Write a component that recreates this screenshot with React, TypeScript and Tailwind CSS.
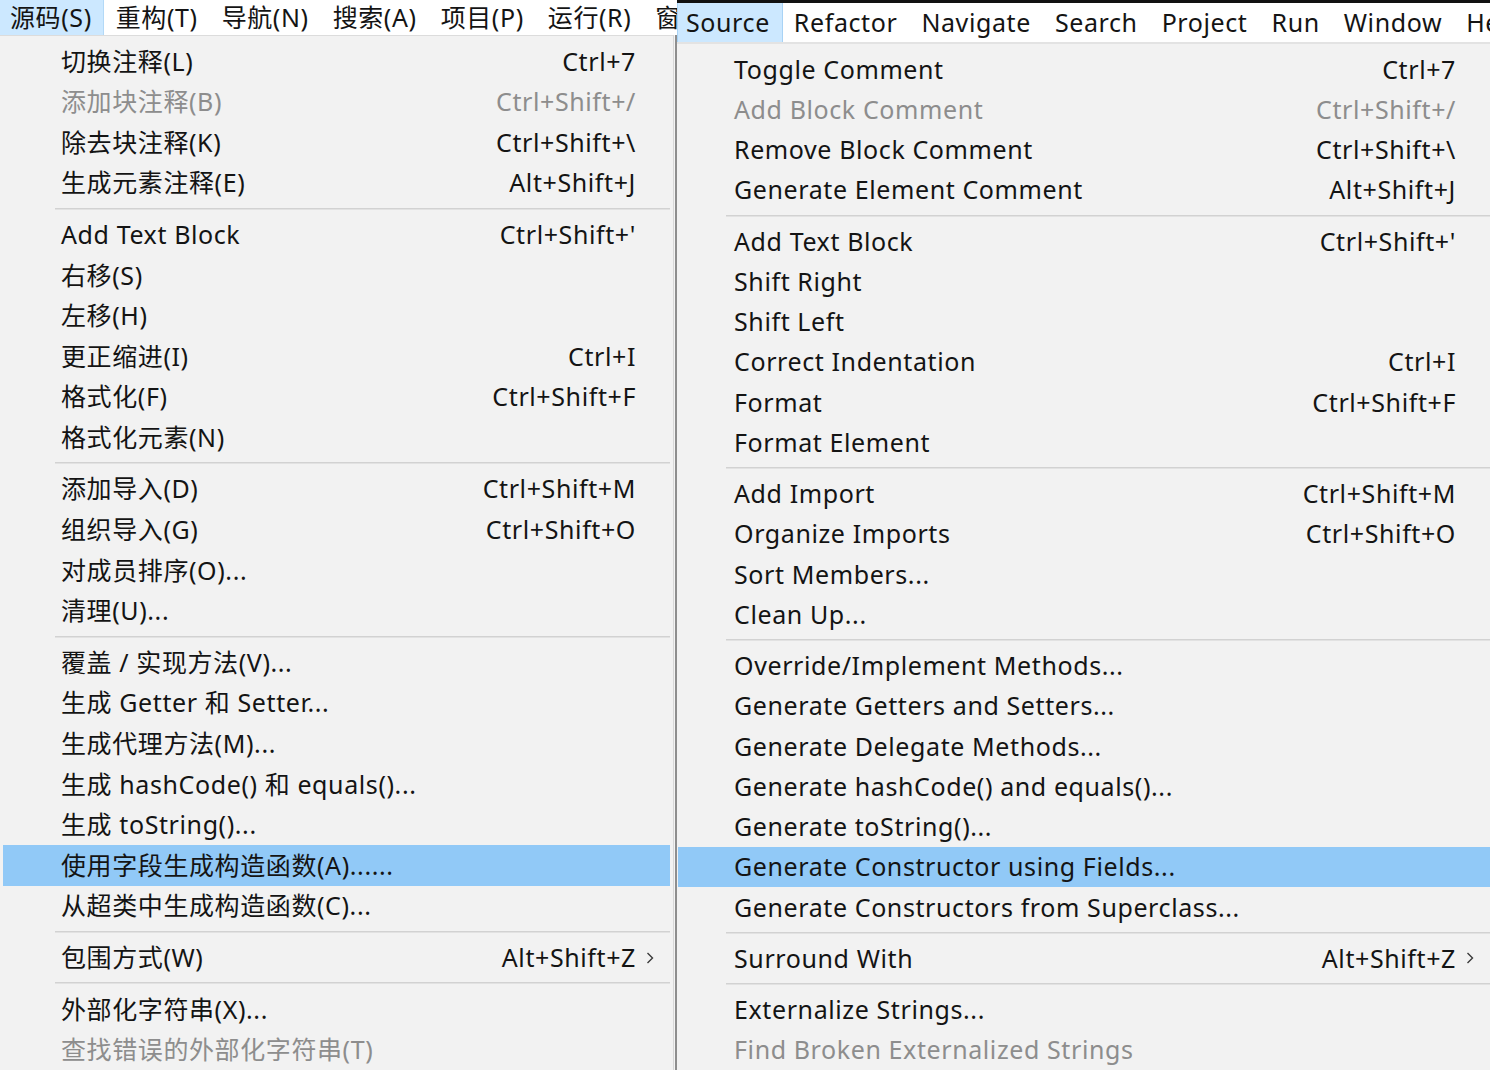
import React from "react";

type Item = { l: string; s?: string; d?: boolean; h?: boolean; sub?: boolean };

const leftGroups: Item[][] = [
  [
    { l: "切换注释(L)", s: "Ctrl+7" },
    { l: "添加块注释(B)", s: "Ctrl+Shift+/", d: true },
    { l: "除去块注释(K)", s: "Ctrl+Shift+\\" },
    { l: "生成元素注释(E)", s: "Alt+Shift+J" },
  ],
  [
    { l: "Add Text Block", s: "Ctrl+Shift+'" },
    { l: "右移(S)" },
    { l: "左移(H)" },
    { l: "更正缩进(I)", s: "Ctrl+I" },
    { l: "格式化(F)", s: "Ctrl+Shift+F" },
    { l: "格式化元素(N)" },
  ],
  [
    { l: "添加导入(D)", s: "Ctrl+Shift+M" },
    { l: "组织导入(G)", s: "Ctrl+Shift+O" },
    { l: "对成员排序(O)..." },
    { l: "清理(U)..." },
  ],
  [
    { l: "覆盖 / 实现方法(V)..." },
    { l: "生成 Getter 和 Setter..." },
    { l: "生成代理方法(M)..." },
    { l: "生成 hashCode() 和 equals()..." },
    { l: "生成 toString()..." },
    { l: "使用字段生成构造函数(A)......", h: true },
    { l: "从超类中生成构造函数(C)..." },
  ],
  [{ l: "包围方式(W)", s: "Alt+Shift+Z", sub: true }],
  [{ l: "外部化字符串(X)..." }, { l: "查找错误的外部化字符串(T)", d: true }],
];

const rightGroups: Item[][] = [
  [
    { l: "Toggle Comment", s: "Ctrl+7" },
    { l: "Add Block Comment", s: "Ctrl+Shift+/", d: true },
    { l: "Remove Block Comment", s: "Ctrl+Shift+\\" },
    { l: "Generate Element Comment", s: "Alt+Shift+J" },
  ],
  [
    { l: "Add Text Block", s: "Ctrl+Shift+'" },
    { l: "Shift Right" },
    { l: "Shift Left" },
    { l: "Correct Indentation", s: "Ctrl+I" },
    { l: "Format", s: "Ctrl+Shift+F" },
    { l: "Format Element" },
  ],
  [
    { l: "Add Import", s: "Ctrl+Shift+M" },
    { l: "Organize Imports", s: "Ctrl+Shift+O" },
    { l: "Sort Members..." },
    { l: "Clean Up..." },
  ],
  [
    { l: "Override/Implement Methods..." },
    { l: "Generate Getters and Setters..." },
    { l: "Generate Delegate Methods..." },
    { l: "Generate hashCode() and equals()..." },
    { l: "Generate toString()..." },
    { l: "Generate Constructor using Fields...", h: true },
    { l: "Generate Constructors from Superclass..." },
  ],
  [{ l: "Surround With", s: "Alt+Shift+Z", sub: true }],
  [{ l: "Externalize Strings..." }, { l: "Find Broken Externalized Strings", d: true }],
];

const Chevron = () => (
  <svg width="8" height="14" viewBox="0 0 8 14" fill="none">
    <path d="M1.5 2 L6.5 7 L1.5 12" stroke="#3a3a3a" strokeWidth="1.4" />
  </svg>
);

function Row({ it, rowCls, padCls }: { it: Item; rowCls: string; padCls: string }) {
  const color = it.d ? "text-[#8d8d8d]" : "text-[#141414]";
  return (
    <div
      className={`${rowCls} ${padCls} flex items-center pr-[16px] ${
        it.h ? "bg-[#91c9f7]" : ""
      } ${color}`}
    >
      <span className="flex-1 whitespace-pre">{it.l}</span>
      {it.s && <span className="whitespace-pre">{it.s}</span>}
      <span className="w-[18px] flex justify-end items-center">{it.sub && <Chevron />}</span>
    </div>
  );
}

function Sep({ mlCls }: { mlCls: string }) {
  return (
    <div className="h-[11px] flex flex-col justify-center">
      <div className={`${mlCls} h-[1px] bg-[#d2d2d2]`} />
      <div className={`${mlCls} h-[1px] bg-[#e2e2e2]`} />
    </div>
  );
}

function Menu({
  groups,
  rowCls,
  padCls,
  sepCls,
}: {
  groups: Item[][];
  rowCls: string;
  padCls: string;
  sepCls: string;
}) {
  return (
    <>
      {groups.map((g, gi) => (
        <React.Fragment key={gi}>
          {gi > 0 && <Sep mlCls={sepCls} />}
          {g.map((it, i) => (
            <Row key={i} it={it} rowCls={rowCls} padCls={padCls} />
          ))}
        </React.Fragment>
      ))}
    </>
  );
}

export default function App() {
  return (
    <div
      className="w-[1490px] h-[1070px] overflow-hidden flex bg-[#f2f2f2] text-[25px] tracking-[0.6px] leading-none"
      style={{ fontFamily: '"Noto Sans", "Noto Sans CJK SC", sans-serif' }}
    >
      {/* Left: Chinese */}
      <div className="w-[677px] shrink-0 flex flex-col">
        <div className="h-[36px] bg-white flex items-center text-[#141414] whitespace-nowrap overflow-hidden">
          <div className="h-full flex items-center pl-[10px] pr-[11px] bg-[#cce8ff] border-r border-[#b3d9f7]">
            源码(S)
          </div>
          <div className="px-[12px]">重构(T)</div>
          <div className="px-[12px]">导航(N)</div>
          <div className="px-[12px]">搜索(A)</div>
          <div className="px-[12px]">项目(P)</div>
          <div className="px-[12px]">运行(R)</div>
          <div className="pl-[12px] w-[40px] overflow-hidden">窗</div>
        </div>
        <div className="flex-1 flex">
          <div className="flex-1 flex flex-col pt-[5px] pl-[3px] pr-[3px] border-t border-[#dcdcdc]">
            <Menu groups={leftGroups} rowCls="h-[40.6px] shrink-0" padCls="pl-[58px]" sepCls="ml-[52px]" />
          </div>
          <div className="w-[1px] bg-[#d8d8d8]" />
          <div className="w-[1px] bg-[#f4f4f4]" />
          <div className="w-[2px] bg-[#8e8e8e]" />
        </div>
      </div>

      {/* Right: English */}
      <div className="flex-1 flex flex-col min-w-0">
        <div className="h-[3px] bg-[#111]" />
        <div className="h-[39px] bg-white flex items-center text-[#141414] whitespace-nowrap overflow-hidden">
          <div className="h-full flex items-center pl-[8px] pr-[12px] bg-[#cce8ff] border-x border-[#a9d3f5]">
            Source
          </div>
          <div className="pl-[11px] pr-[12px]">Refactor</div>
          <div className="px-[12px]">Navigate</div>
          <div className="px-[12px]">Search</div>
          <div className="px-[12px]">Project</div>
          <div className="px-[12px]">Run</div>
          <div className="px-[12px]">Window</div>
          <div className="pl-[12px] w-[40px] overflow-hidden">He</div>
        </div>
        <div className="flex-1 flex flex-col pt-[5px] pl-[1px] border-t-2 border-[#e3e3e3]">
          <Menu groups={rightGroups} rowCls="h-[40.25px] shrink-0" padCls="pl-[56px]" sepCls="ml-[48px]" />
        </div>
      </div>
    </div>
  );
}
